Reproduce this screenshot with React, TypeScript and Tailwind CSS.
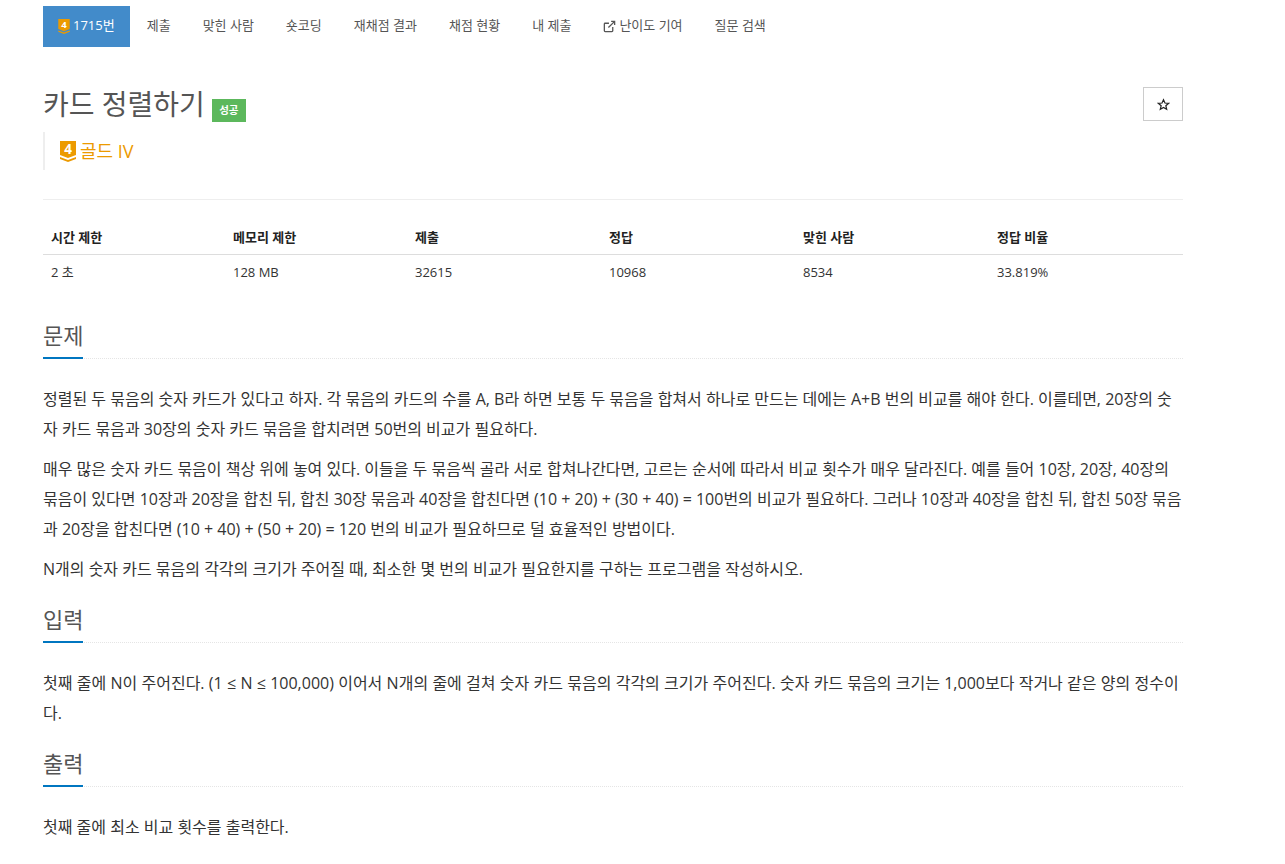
import React from "react";

function Tier({ w, h }: { w: number; h: number }) {
  return (
    <svg width={w} height={h} viewBox="0 0 16 21" className="shrink-0">
      <path d="M0 0H16V14L8 17L0 14Z" fill="#ec9a00" />
      <path d="M0 16L8 19L16 16V18L8 21L0 18Z" fill="#ec9a00" />
      <text x="8" y="13" textAnchor="middle" fontSize="13.5" fontWeight="700" fill="#fff" fontFamily="'Open Sans', sans-serif">4</text>
    </svg>
  );
}

const tabs = ["제출", "맞힌 사람", "숏코딩", "재채점 결과", "채점 현황", "내 제출"];

function Heading({ children }: { children: React.ReactNode }) {
  return (
    <div className="border-b border-dotted border-[#e5e5e5] h-[37px] mb-[25px]">
      <h2 className="inline-block h-[37px] border-b-2 border-[#0076c0] text-[22px] leading-[26px] text-[#555] font-normal">{children}</h2>
    </div>
  );
}

const cols = [
  ["시간 제한", "2 초", "w-[182px]"],
  ["메모리 제한", "128 MB", "w-[182px]"],
  ["제출", "32615", "w-[194px]"],
  ["정답", "10968", "w-[194px]"],
  ["맞힌 사람", "8534", "w-[194px]"],
  ["정답 비율", "33.819%", "w-[194px]"],
];

export default function App() {
  return (
    <div className="bg-white w-[1285px] h-[864px] overflow-hidden text-[#333]" style={{ fontFamily: "'Open Sans','Noto Sans CJK KR',sans-serif" }}>
      <div className="ml-[43px] w-[1140px]">
        <nav className="flex pt-[6px] h-[47px] text-[13px] text-[#555]">
          <a className="flex items-center gap-[3px] h-[41px] pb-[1px] px-[15px] bg-[#428bca] text-white mr-[2px]">
            <Tier w={12} h={15} />
            <span>1715번</span>
          </a>
          {tabs.map((t) => (
            <a key={t} className="flex items-center h-[41px] pb-[1px] px-[15px] mr-[2px]">{t}</a>
          ))}
          <a className="flex items-center h-[41px] pb-[1px] px-[15px] mr-[2px]">
            <svg width="13" height="13" viewBox="0 0 24 24" fill="none" stroke="#555" strokeWidth="2.4" className="mr-[3px]">
              <path d="M18 13v7a1.5 1.5 0 0 1-1.5 1.5H4A1.5 1.5 0 0 1 2.500 20V7.500A1.500 1.500 0 0 1 4 6h7" />
              <path d="M15 2.500h6.500V9M21.500 2.500L10 14" />
            </svg>
            난이도 기여
          </a>
          <a className="flex items-center h-[41px] pb-[1px] px-[15px] mr-[2px]">질문 검색</a>
        </nav>

        <div className="flex justify-between mt-[40px] h-[34px]">
          <div className="flex items-start">
            <h1 className="text-[28px] leading-[34px] text-[#555] font-normal">카드 정렬하기</h1>
            <span className="ml-[7px] mt-[12px] w-[34px] h-[23px] bg-[#5cb85c] text-white text-[10.5px] font-bold flex items-center justify-center">성공</span>
          </div>
          <button className="w-[40px] h-[34px] border border-[#ccc] flex items-center justify-center">
            <svg width="13" height="13" viewBox="0 0 24 24" fill="none" stroke="#222" strokeWidth="2.2" strokeLinejoin="miter">
              <path d="M12 3l2.700 6.200 6.800.6-5.200 4.400 1.600 6.600L12 17.300 6.100 20.800l1.600-6.600L2.500 9.800l6.800-.6z" />
            </svg>
          </button>
        </div>

        <div className="mt-[11px] h-[38px] border-l-[2px] border-[#eee] pl-[15px] flex items-center gap-[4px] text-[18px] text-[#ec9a00]">
          <Tier w={16} h={21} />
          <span>골드 IV</span>
        </div>

        <div className="mt-[29px] border-t border-[#eee]">
          <div className="mt-[20px] flex text-[13px] font-bold text-[#222] h-[35px] pt-[2px] items-center border-b-[1px] border-[#ddd]">
            {cols.map((c) => (
              <div key={c[0]} className={`${c[2]} pl-2`}>{c[0]}</div>
            ))}
          </div>
          <div className="flex text-[13px] h-[36px] items-center text-[#333]">
            {cols.map((c) => (
              <div key={c[0]} className={`${c[2]} pl-2`}>{c[1]}</div>
            ))}
          </div>
        </div>

        <section className="mt-[31px] text-[16px] leading-[30px]">
          <Heading>문제</Heading>
          <p className="mb-[10px]">정렬된 두 묶음의 숫자 카드가 있다고 하자. 각 묶음의 카드의 수를 A, B라 하면 보통 두 묶음을 합쳐서 하나로 만드는 데에는 A+B 번의 비교를 해야 한다. 이를테면, 20장의 숫자 카드 묶음과 30장의 숫자 카드 묶음을 합치려면 50번의 비교가 필요하다.</p>
          <p className="mb-[10px]">매우 많은 숫자 카드 묶음이 책상 위에 놓여 있다. 이들을 두 묶음씩 골라 서로 합쳐나간다면, 고르는 순서에 따라서 비교 횟수가 매우 달라진다. 예를 들어 10장, 20장, 40장의 묶음이 있다면 10장과 20장을 합친 뒤, 합친 30장 묶음과 40장을 합친다면 (10 + 20) + (30 + 40) = 100번의 비교가 필요하다. 그러나 10장과 40장을 합친 뒤, 합친 50장 묶음과 20장을 합친다면 (10 + 40) + (50 + 20) = 120 번의 비교가 필요하므로 덜 효율적인 방법이다.</p>
          <p>N개의 숫자 카드 묶음의 각각의 크기가 주어질 때, 최소한 몇 번의 비교가 필요한지를 구하는 프로그램을 작성하시오.</p>
        </section>

        <section className="mt-[22px] text-[16px] leading-[30px]">
          <Heading>입력</Heading>
          <p className="[word-spacing:0.12px]">첫째 줄에 N이 주어진다. (1 ≤ N ≤ 100,000) 이어서 N개의 줄에 걸쳐 숫자 카드 묶음의 각각의 크기가 주어진다. 숫자 카드 묶음의 크기는 1,000보다 작거나 같은 양의 정수이다.</p>
        </section>

        <section className="mt-[22px] text-[16px] leading-[30px]">
          <Heading>출력</Heading>
          <p>첫째 줄에 최소 비교 횟수를 출력한다.</p>
        </section>
      </div>
    </div>
  );
}
